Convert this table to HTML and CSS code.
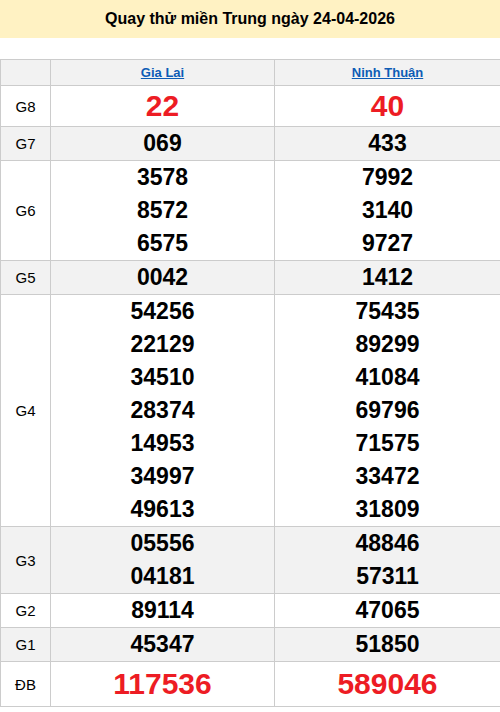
FILE: index.html
```html
<!DOCTYPE html>
<html lang="vi">
<head>
<meta charset="utf-8">
<link rel="stylesheet" href="styles.css">
</head>
<body>
<h1 class="title">Quay thử miền Trung ngày 24-04-2026</h1>
<table class="kq">
  <colgroup><col class="c-label"><col class="c-prov1"><col class="c-prov2"></colgroup>
  <tr class="head"><th></th><th><a href="#">Gia Lai</a></th><th><a href="#">Ninh Thuận</a></th></tr>
  <tr class="g8"><td class="lbl">G8</td><td><div class="big">22</div></td><td><div class="big">40</div></td></tr>
  <tr class="alt"><td class="lbl">G7</td><td><div class="n">069</div></td><td><div class="n">433</div></td></tr>
  <tr><td class="lbl">G6</td><td><div class="n">3578</div><div class="n">8572</div><div class="n">6575</div></td><td><div class="n">7992</div><div class="n">3140</div><div class="n">9727</div></td></tr>
  <tr class="alt"><td class="lbl">G5</td><td><div class="n">0042</div></td><td><div class="n">1412</div></td></tr>
  <tr><td class="lbl">G4</td><td><div class="n">54256</div><div class="n">22129</div><div class="n">34510</div><div class="n">28374</div><div class="n">14953</div><div class="n">34997</div><div class="n">49613</div></td><td><div class="n">75435</div><div class="n">89299</div><div class="n">41084</div><div class="n">69796</div><div class="n">71575</div><div class="n">33472</div><div class="n">31809</div></td></tr>
  <tr class="alt"><td class="lbl">G3</td><td><div class="n">05556</div><div class="n">04181</div></td><td><div class="n">48846</div><div class="n">57311</div></td></tr>
  <tr><td class="lbl">G2</td><td><div class="n">89114</div></td><td><div class="n">47065</div></td></tr>
  <tr class="alt"><td class="lbl">G1</td><td><div class="n">45347</div></td><td><div class="n">51850</div></td></tr>
  <tr class="db"><td class="lbl">ĐB</td><td><div class="big">117536</div></td><td><div class="big">589046</div></td></tr>
</table>
</body>
</html>
```
FILE: styles.css
```css
html, body { margin: 0; padding: 0; background: #fff; }
body { font-family: "Liberation Sans", Arial, sans-serif; color: #000; }
.title {
  margin: 0;
  height: 38px;
  line-height: 38px;
  background: #fff2c3;
  text-align: center;
  font-size: 16px;
  font-weight: bold;
}
.kq {
  margin-top: 21px;
  width: 500px;
  border-collapse: collapse;
  table-layout: fixed;
}
.c-label { width: 50px; }
.c-prov1 { width: 224px; }
.c-prov2 { width: 226px; }
.kq th, .kq td {
  border: 1px solid #cccccc;
  padding: 0;
  text-align: center;
  vertical-align: middle;
}
.head th { background: #f2f2f2; height: 25px; font-size: 13px; font-weight: bold; }
.head a { color: #0d5cb6; text-decoration: underline; }
.alt td { background: #f2f2f2; }
.lbl { font-size: 15px; }
.n { font-size: 23px; font-weight: bold; line-height: 33px; }
.big { font-size: 30px; font-weight: bold; color: #ed1c24; }
.g8 .big { line-height: 40px; }
.db .big { line-height: 44px; }
```
